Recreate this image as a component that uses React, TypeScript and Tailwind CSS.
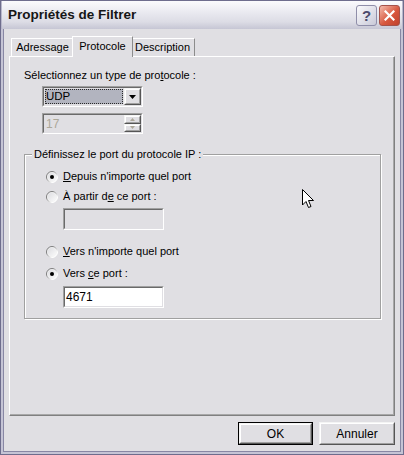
import React from 'react';

function Radio({ checked }: { checked?: boolean }) {
  return (
    <svg width="12" height="12" viewBox="0 0 12 12" className="shrink-0">
      <defs>
        <linearGradient id="rstroke" x1="0" y1="0" x2="1" y2="1">
          <stop offset="0.3" stopColor="#7c7c7c" />
          <stop offset="0.75" stopColor="#ffffff" />
        </linearGradient>
        <linearGradient id="rfill" x1="0" y1="0" x2="1" y2="1">
          <stop offset="0" stopColor="#d8d8dc" />
          <stop offset="1" stopColor="#ffffff" />
        </linearGradient>
      </defs>
      <circle cx="6" cy="6" r="5.5" fill="url(#rfill)" stroke="url(#rstroke)" />
      <circle cx="6" cy="6" r="4.5" fill="none" stroke="#f4f4f4" strokeWidth="0.6" />
      {checked && <circle cx="6" cy="6" r="2" fill="#000" />}
    </svg>
  );
}

function Sunken({ children, className }: { children?: React.ReactNode; className?: string }) {
  return (
    <div className={`border border-t-[#a0a0a0] border-l-[#a0a0a0] border-b-white border-r-white ${className ?? ''}`}>
      <div className="h-full w-full border border-t-[#6a6a6a] border-l-[#6a6a6a] border-b-[#e0dfe3] border-r-[#e0dfe3] flex">
        {children}
      </div>
    </div>
  );
}

function RaisedBtn({ children, className }: { children?: React.ReactNode; className?: string }) {
  return (
    <div className={`border border-t-[#f4f4f4] border-l-[#f4f4f4] border-b-[#555] border-r-[#555] bg-[#e0dfe3] ${className ?? ''}`}>
      <div className="h-full w-full border border-t-white border-l-white border-b-[#a0a0a0] border-r-[#a0a0a0] flex items-center justify-center">
        {children}
      </div>
    </div>
  );
}

function Row({ checked, children, className }: { checked?: boolean; children: React.ReactNode; className?: string }) {
  return (
    <div className={`flex items-center h-[13px] ml-[21px] gap-[5px] ${className ?? ''}`}>
      <Radio checked={checked} />
      <span className="leading-[13px]">{children}</span>
    </div>
  );
}

export default function App() {
  return (
    <div className="relative w-[404px] h-[455px] flex flex-col border border-[#6e6d8d] bg-[#e0dfe3] font-['Liberation_Sans',Arial,sans-serif] text-[11px] text-black overflow-hidden">
      {/* title bar */}
      <div className="h-[28px] shrink-0 flex items-center pl-[6px] pr-[2px] bg-[linear-gradient(to_bottom,#fbfbfd_0%,#ececf2_35%,#dcdce5_75%,#c6c6d4_100%)] border-x border-[#b9b8cc]">
        <span className="flex-1 text-[13.5px] font-bold text-[#161616]">Propriétés de Filtrer</span>
        <div className="w-[21px] h-[21px] mr-[2px] rounded-[3px] border border-[#8f8ea9] bg-[linear-gradient(to_bottom_right,#fafafc,#c9c9d8)] flex items-center justify-center text-[15px] font-bold text-[#4c4b6c] leading-none">
          ?
        </div>
        <div className="w-[21px] h-[21px] rounded-[3px] border border-[#a4524a] bg-[linear-gradient(to_bottom_right,#f4bcae,#d8583f_55%,#c0412c)] flex items-center justify-center">
          <svg width="11" height="11" viewBox="0 0 11 11">
            <path d="M1.5 1.5 L9.5 9.5 M9.5 1.5 L1.5 9.5" stroke="#fff" strokeWidth="2.2" strokeLinecap="square" />
          </svg>
        </div>
      </div>

      {/* body with frame */}
      <div className="flex-1 flex flex-col border-x-2 border-b-2 border-[#c5c4d5]">
        <div className="flex-1 flex flex-col border-x border-b border-[#8887a4] pt-[7px]">
          {/* tabs */}
          <div className="h-[20px] flex items-end ml-[7px]">
            <div className="w-[63px] h-[18px] border-t border-l border-r border-t-white border-l-white border-r-[#8c8c8c] flex items-center justify-center">
              Adressage
            </div>
            <div className="relative z-10 -ml-[2px] -mb-px w-[61px] h-[21px] bg-[#e0dfe3] border-t border-l border-r border-t-white border-l-white border-r-[#8c8c8c] flex items-center justify-center pb-[2px]">
              Protocole
            </div>
            <div className="-ml-[2px] w-[64px] h-[18px] border-t border-r border-t-white border-r-[#8c8c8c] flex items-center justify-center">
              Description
            </div>
          </div>

          {/* panel */}
          <div className="mx-[5px] h-[360px] border border-t-white border-l-white border-b-[#808080] border-r-[#808080]">
            <div className="h-full border-b border-r border-b-[#a8a8a8] border-r-[#a8a8a8] pt-[12px] pl-[14px]">
              <div className="leading-[13px]">
                Sélectionnez un type de pro<span className="underline">t</span>ocole :
              </div>

              <Sunken className="ml-[18px] mt-[4px] w-[101px] h-[21px]">
                <div className="flex-1 m-px bg-[#b2b4bf] outline-1 outline-dotted outline-[#2a2a2a] -outline-offset-1 flex items-center pl-[1px] leading-none text-[11.5px]">
                  UDP
                </div>
                <RaisedBtn className="w-[17px] h-[17px]">
                  <svg width="7" height="4" viewBox="0 0 7 4">
                    <path d="M0 0 H7 L3.5 4 Z" fill="#000" />
                  </svg>
                </RaisedBtn>
              </Sunken>

              <Sunken className="ml-[18px] mt-[6px] w-[101px] h-[21px]">
                <div className="flex-1 flex items-center pl-[2px] text-[#aca899] text-[12px]">17</div>
                <div className="w-[17px] flex flex-col">
                  <RaisedBtn className="w-[17px] h-[8.5px]">
                    <svg width="5" height="3" viewBox="0 0 5 3">
                      <path d="M0 3 H5 L2.5 0 Z" fill="#aca899" />
                    </svg>
                  </RaisedBtn>
                  <RaisedBtn className="w-[17px] h-[8.5px]">
                    <svg width="5" height="3" viewBox="0 0 5 3">
                      <path d="M0 0 H5 L2.5 3 Z" fill="#aca899" />
                    </svg>
                  </RaisedBtn>
                </div>
              </Sunken>

              {/* group box */}
              <div className="relative mt-[20px] w-[357px] h-[165px] border border-[#a0a0a0] shadow-[inset_1px_1px_0_#fff,1px_1px_0_#fff] pt-[15px]">
                <span className="absolute -top-[7px] left-[7px] px-[2px] bg-[#e0dfe3] leading-[13px]">
                  Définissez le port du protocole IP :
                </span>
                <Row checked>
                  <span className="underline">D</span>epuis n'importe quel port
                </Row>
                <Row className="mt-[7px]">
                  À partir d<span className="underline">e</span> ce port :
                </Row>
                <Sunken className="ml-[38px] mt-[5px] w-[101px] h-[22px]" />
                <Row className="mt-[15px]">
                  <span className="underline">V</span>ers n'importe quel port
                </Row>
                <Row checked className="mt-[9px]">
                  Vers <span className="underline">c</span>e port :
                </Row>
                <Sunken className="ml-[38px] mt-[6px] w-[101px] h-[22px]">
                  <div className="flex-1 bg-white flex items-center pl-[1px] text-[12px]">4671</div>
                </Sunken>
              </div>
            </div>
          </div>

          {/* buttons */}
          <div className="mt-[6px] flex justify-end gap-[6px] pr-[5px]">
            <div className="w-[75px] h-[23px] border border-black">
              <RaisedBtn className="w-full h-full">
                <span className="text-[12px]">OK</span>
              </RaisedBtn>
            </div>
            <RaisedBtn className="w-[76px] h-[23px]">
              <span className="text-[12px]">Annuler</span>
            </RaisedBtn>
          </div>
        </div>
      </div>

      {/* mouse cursor */}
      <svg className="absolute left-[301px] top-[188px]" width="13" height="21" viewBox="0 0 13 21">
        <path d="M0.5 0.5 V16 L4 12.5 L6.5 18.5 L9 17.5 L6.5 11.5 H11.5 Z" fill="#fff" stroke="#000" strokeWidth="1" strokeLinejoin="miter" />
      </svg>
    </div>
  );
}
